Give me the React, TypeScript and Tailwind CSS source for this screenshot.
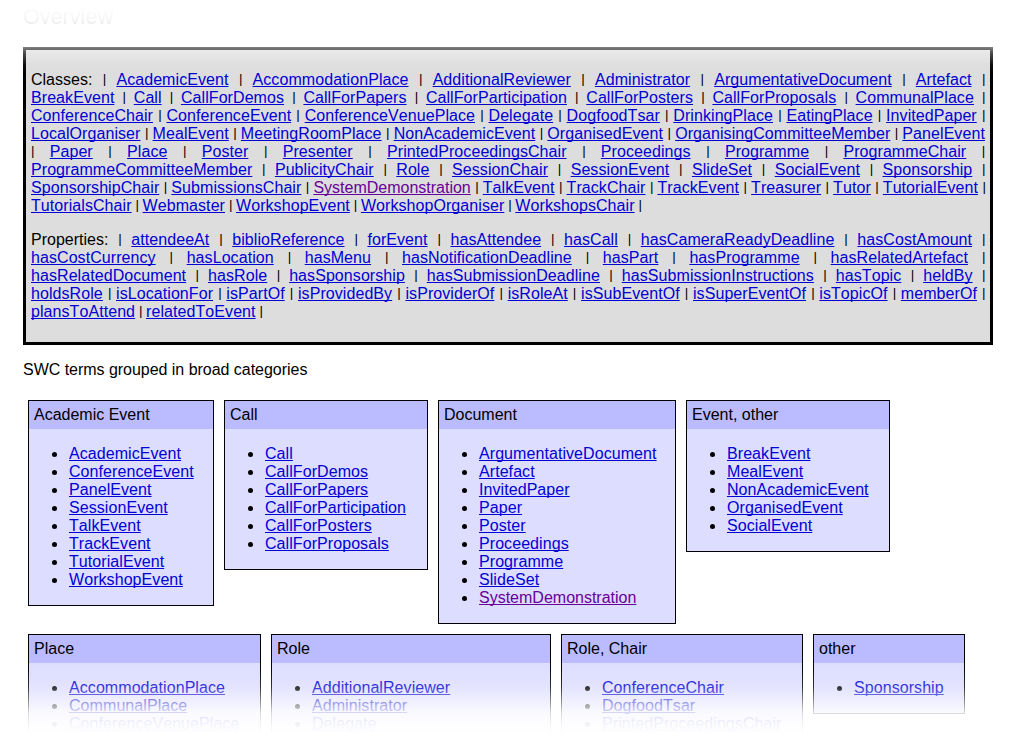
const classLines = [
  "Classes:_ | AcademicEvent | AccommodationPlace | AdditionalReviewer | Administrator | ArgumentativeDocument | Artefact |",
  "BreakEvent | Call | CallForDemos | CallForPapers | CallForParticipation | CallForPosters | CallForProposals | CommunalPlace |",
  "ConferenceChair | ConferenceEvent | ConferenceVenuePlace | Delegate | DogfoodTsar | DrinkingPlace | EatingPlace | InvitedPaper |",
  "LocalOrganiser | MealEvent | MeetingRoomPlace | NonAcademicEvent | OrganisedEvent | OrganisingCommitteeMember | PanelEvent",
  "| Paper | Place | Poster | Presenter | PrintedProceedingsChair | Proceedings | Programme | ProgrammeChair |",
  "ProgrammeCommitteeMember | PublicityChair | Role | SessionChair | SessionEvent | SlideSet | SocialEvent | Sponsorship |",
  "SponsorshipChair | SubmissionsChair | SystemDemonstration | TalkEvent | TrackChair | TrackEvent | Treasurer | Tutor | TutorialEvent |",
  "TutorialsChair | Webmaster | WorkshopEvent | WorkshopOrganiser | WorkshopsChair |",
];

const propertyLines = [
  "Properties:_ | attendeeAt | biblioReference | forEvent | hasAttendee | hasCall | hasCameraReadyDeadline | hasCostAmount |",
  "hasCostCurrency | hasLocation | hasMenu | hasNotificationDeadline | hasPart | hasProgramme | hasRelatedArtefact |",
  "hasRelatedDocument | hasRole | hasSponsorship | hasSubmissionDeadline | hasSubmissionInstructions | hasTopic | heldBy |",
  "holdsRole | isLocationFor | isPartOf | isProvidedBy | isProviderOf | isRoleAt | isSubEventOf | isSuperEventOf | isTopicOf | memberOf |",
  "plansToAttend | relatedToEvent |",
];

const rows = [
  [
    { title: "Academic Event", size: "w-[186px]", items: ["AcademicEvent", "ConferenceEvent", "PanelEvent", "SessionEvent", "TalkEvent", "TrackEvent", "TutorialEvent", "WorkshopEvent"] },
    { title: "Call", size: "w-[204px]", items: ["Call", "CallForDemos", "CallForPapers", "CallForParticipation", "CallForPosters", "CallForProposals"] },
    { title: "Document", size: "w-[238px]", items: ["ArgumentativeDocument", "Artefact", "InvitedPaper", "Paper", "Poster", "Proceedings", "Programme", "SlideSet", "SystemDemonstration"] },
    { title: "Event, other", size: "w-[204px]", items: ["BreakEvent", "MealEvent", "NonAcademicEvent", "OrganisedEvent", "SocialEvent"] },
  ],
  [
    { title: "Place", size: "w-[233px] h-[120px]", items: ["AccommodationPlace", "CommunalPlace", "ConferenceVenuePlace"] },
    { title: "Role", size: "w-[280px] h-[120px]", items: ["AdditionalReviewer", "Administrator", "Delegate"] },
    { title: "Role, Chair", size: "w-[242px] h-[120px]", items: ["ConferenceChair", "DogfoodTsar", "PrintedProceedingsChair"] },
    { title: "other", size: "w-[152px]", items: ["Sponsorship"] },
  ],
];

function TermLink({ name }: { name: string }) {
  const color = name === "SystemDemonstration" ? "text-[#660099]" : "text-[#0000d6] tracking-[0.07px]";
  return (
    <a href="#" className={`${color} underline decoration-1 underline-offset-1 [text-decoration-skip-ink:none]`}>
      {name}
    </a>
  );
}

function Bar() {
  return <span className="inline-block h-[18px] w-[3.1px] align-top text-center text-[13.5px] leading-[15px]">|</span>;
}

function TermLines({ lines }: { lines: string[] }) {
  return (
    <div className="my-4">
      {lines.map((line, n) => (
        <div key={n} className={n === lines.length - 1 ? "whitespace-nowrap [word-spacing:-0.5px]" : "whitespace-nowrap text-justify [text-align-last:justify]"}>
          {line.split(" ").map((word, i) => (
            <span key={i}>
              {i > 0 && " "}
              {word === "|" ? <Bar /> : word.endsWith("_") ? word.replace("_", "") + " " : <TermLink name={word} />}
            </span>
          ))}
        </div>
      ))}
    </div>
  );
}

function Card({ title, size, items }: { title: string; size: string; items: string[] }) {
  return (
    <section className={`${size} shrink-0 border border-black bg-[#ddddff]`}>
      <h3 className="bg-[#bbbbff] p-[5px]">{title}</h3>
      <ul className="mt-[15px] mb-[17px] list-disc pl-10 marker:text-[18px]">
        {items.map((item) => (
          <li key={item} className="h-[18px] whitespace-nowrap"><TermLink name={item} /></li>
        ))}
      </ul>
    </section>
  );
}

export default function App() {
  return (
    <div className="relative h-[744px] w-[1013px] overflow-hidden bg-white px-[23px] font-['Liberation_Sans',Arial,sans-serif] text-[16px] leading-[18px] text-black [font-kerning:none]">
      <h2 className="h-[47px] pt-[5px] text-[21.6px] leading-6">Overview</h2>
      <div className="w-[970px] border-[3px] border-black bg-[#dddddd] p-[5px]">
        <TermLines lines={classLines} />
        <TermLines lines={propertyLines} />
      </div>
      <p className="mt-4 tracking-[-0.03px]">SWC terms grouped in broad categories</p>
      <div className="mt-[21px] flex flex-col gap-[10px] pl-[5px]">
        {rows.map((row, i) => (
          <div key={i} className="flex items-start gap-[10px]">
            {row.map((card) => <Card key={card.title} {...card} />)}
          </div>
        ))}
      </div>
      <div className="pointer-events-none absolute inset-x-0 top-0 h-[80px] bg-[linear-gradient(to_bottom,#fff_0px,rgba(255,255,255,0.97)_17px,rgba(255,255,255,0.92)_25px,rgba(255,255,255,0.5)_47px,rgba(255,255,255,0.3)_53px,rgba(255,255,255,0.06)_65px,rgba(255,255,255,0)_75px)]" />
      <div className="pointer-events-none absolute inset-x-0 bottom-0 h-[90px] bg-[linear-gradient(to_bottom,rgba(255,255,255,0)_0px,rgba(255,255,255,0.03)_15px,rgba(255,255,255,0.2)_33px,rgba(255,255,255,0.62)_50px,rgba(255,255,255,0.85)_59px,rgba(255,255,255,0.94)_69px,#fff_80px)]" />
    </div>
  );
}
